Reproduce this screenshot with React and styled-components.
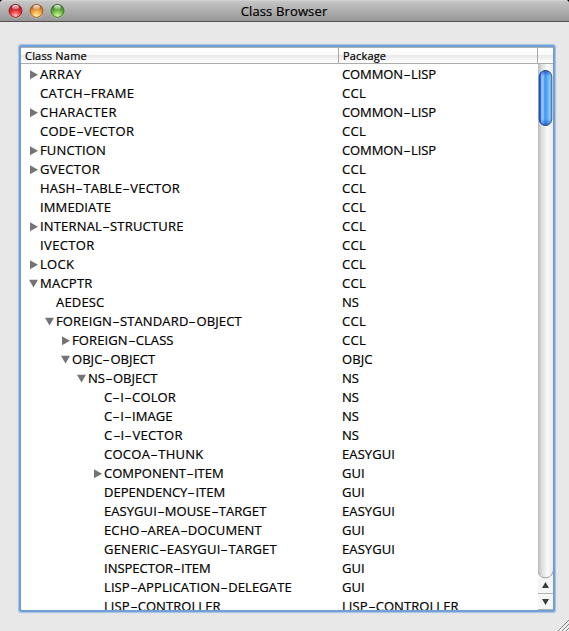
import React from "react";
import styled, { createGlobalStyle } from "styled-components";

const Global = createGlobalStyle`
  *, *::before, *::after { box-sizing: border-box; }
  html, body { margin: 0; background: #000; overflow: hidden; }
`;

const Window = styled.div`
  width: 569px;
  height: 631px;
  display: flex;
  flex-direction: column;
  position: relative;
  background: #e8e8e8;
  border-radius: 4px 4px 0 0;
  overflow: hidden;
  color: #000;
  font-family: "Open Sans", "Noto Sans", sans-serif;
  -webkit-text-stroke: 0.2px #000;
`;

const TitleBar = styled.header`
  flex: none;
  height: 22px;
  display: grid;
  grid-template-columns: 76px 1fr 77px;
  align-items: center;
  border-bottom: 1px solid #515151;
  background: linear-gradient(#dedede 0, #c6c6c6 1px, #969696 100%);
`;

const Lights = styled.div`
  display: flex;
  gap: 6px;
  padding-left: 7.5px;
  padding-top: 1px;
`;

const Title = styled.h1`
  margin: 0;
  text-align: center;
  font-size: 13px;
  font-weight: 400;
  line-height: 20px;
  letter-spacing: 0.14px;
`;

const Light = styled.svg`
  display: block;
  width: 15px;
  height: 16px;
`;

const Content = styled.main`
  flex: 1;
  padding: 25px 16px 21px 21px;
`;

const Outline = styled.section`
  width: 532px;
  height: 563px;
  display: flex;
  flex-direction: column;
  background: #fff;
  box-shadow: 0 0 0 2px #70a0d6, 0 0 1px 3px #a5c1e1;
  border-radius: 1px;
`;

const HeaderRow = styled.div`
  flex: none;
  height: 17px;
  display: grid;
  grid-template-columns: 318px 199px 15px;
  border-top: 1px solid #b0b0b0;
  border-bottom: 1px solid #acacac;
  background: linear-gradient(#fff 0, #fafafa 45%, #e9e9e9 50%, #fff 100%);
`;

const HeaderCell = styled.div`
  padding-left: 4px;
  border-right: ${(p) => (p.$last ? "0" : "1px solid #a8a8a8")};
  font-size: 11px;
  line-height: 15px;
  letter-spacing: ${(p) => p.$spacing || 0}px;
`;

const Body = styled.div`
  flex: 1;
  min-height: 0;
  display: flex;
`;

const List = styled.div`
  flex: 1;
  overflow: hidden;
  padding-top: 1px;
`;

const Row = styled.div`
  height: 19px;
  display: grid;
  grid-template-columns: 321px 1fr;
  font-size: 13px;
  line-height: 19px;
  white-space: nowrap;
`;

const NameCell = styled.div`
  display: flex;
  align-items: center;
  padding-left: ${(p) => 7 + p.$depth * 16}px;
`;

const Toggle = styled.svg`
  flex: none;
  width: 12px;
  height: 12px;
`;

const Label = styled.span`
  letter-spacing: ${(p) => p.$spacing}px;
`;

const Hyphen = styled.span`
  display: inline-block;
  width: 8px;
  text-align: center;
  letter-spacing: 0;
  transform: scaleX(1.7);
`;

const ScrollBar = styled.div`
  flex: none;
  width: 15px;
  display: flex;
  flex-direction: column;
`;

const Drawing = styled.svg`
  display: block;
`;

const Grip = styled.svg`
  position: absolute;
  right: 0;
  bottom: 0;
`;

// name, depth, disclosure state, package, tracking of the name
const rows = [
  ["ARRAY", 0, "closed", "COMMON-LISP", 0.4],
  ["CATCH-FRAME", 0, "", "CCL", 0.3],
  ["CHARACTER", 0, "closed", "COMMON-LISP", 0.45],
  ["CODE-VECTOR", 0, "", "CCL", 0.28],
  ["FUNCTION", 0, "closed", "COMMON-LISP", 0.15],
  ["GVECTOR", 0, "closed", "CCL", 0.3],
  ["HASH-TABLE-VECTOR", 0, "", "CCL", 0.22],
  ["IMMEDIATE", 0, "", "CCL", 0.12],
  ["INTERNAL-STRUCTURE", 0, "closed", "CCL", 0.18],
  ["IVECTOR", 0, "", "CCL", 0.38],
  ["LOCK", 0, "closed", "CCL", 0.3],
  ["MACPTR", 0, "open", "CCL", 0.25],
  ["AEDESC", 1, "", "NS", 0.17],
  ["FOREIGN-STANDARD-OBJECT", 1, "open", "CCL", 0.14],
  ["FOREIGN-CLASS", 2, "closed", "CCL", 0.1],
  ["OBJC-OBJECT", 2, "open", "OBJC", 0.05],
  ["NS-OBJECT", 3, "open", "NS", 0],
  ["C-I-COLOR", 4, "", "NS", 0.13],
  ["C-I-IMAGE", 4, "", "NS", 0.07],
  ["C-I-VECTOR", 4, "", "NS", 0.32],
  ["COCOA-THUNK", 4, "", "EASYGUI", 0.28],
  ["COMPONENT-ITEM", 4, "closed", "GUI", 0],
  ["DEPENDENCY-ITEM", 4, "", "GUI", 0],
  ["EASYGUI-MOUSE-TARGET", 4, "", "EASYGUI", 0.06],
  ["ECHO-AREA-DOCUMENT", 4, "", "GUI", 0.12],
  ["GENERIC-EASYGUI-TARGET", 4, "", "EASYGUI", 0.18],
  ["INSPECTOR-ITEM", 4, "", "GUI", 0],
  ["LISP-APPLICATION-DELEGATE", 4, "", "GUI", 0.1],
  ["LISP-CONTROLLER", 4, "", "LISP-CONTROLLER", 0.07],
];

const packageSpacing = {
  "COMMON-LISP": -0.1,
  CCL: 0.3,
  EASYGUI: 0.1,
  OBJC: 0.1,
  "LISP-CONTROLLER": 0.07,
};

function Name({ children, spacing = 0 }) {
  return (
    <Label $spacing={spacing}>
      {children.split("-").map((part, i) => (
        <React.Fragment key={i}>
          {i > 0 && <Hyphen>-</Hyphen>}
          {part}
        </React.Fragment>
      ))}
    </Label>
  );
}

function Disclosure({ state }) {
  return (
    <Toggle viewBox="0 0 12 12">
      {state === "closed" && <path d="M2 1.2L10 5.7L2 10.2Z" fill="#747474" />}
      {state === "open" && <path d="M1 1.8H10L5.5 9.5Z" fill="#747474" />}
    </Toggle>
  );
}

function Lamp({ id, dark, mid, glow }) {
  return (
    <Light viewBox="0 0 15 16">
      <defs>
        <radialGradient id={id} cx="50%" cy="88%" r="85%">
          <stop offset="0" stopColor={glow} />
          <stop offset="0.5" stopColor={mid} />
          <stop offset="1" stopColor={dark} />
        </radialGradient>
        <linearGradient id={id + "-shine"} x2="0" y2="1">
          <stop offset="0" stopColor="#fff" stopOpacity="0.95" />
          <stop offset="1" stopColor="#fff" stopOpacity="0.15" />
        </linearGradient>
      </defs>
      <circle cx="7.5" cy="8.6" r="7" fill="#d6d6d6" opacity="0.7" />
      <circle cx="7.5" cy="7.9" r="6.5" fill={`url(#${id})`} stroke={dark} strokeOpacity="0.85" />
      <ellipse cx="7.5" cy="4.2" rx="3.4" ry="2.3" fill={`url(#${id}-shine)`} />
    </Light>
  );
}

function Scroller() {
  return (
    <ScrollBar>
      <Drawing width="15" height="546" viewBox="0 0 15 546">
        <defs>
          <linearGradient id="track">
            <stop offset="0" stopColor="#b9b9b9" />
            <stop offset="0.25" stopColor="#dedede" />
            <stop offset="0.65" stopColor="#fbfbfb" />
            <stop offset="1" stopColor="#e9e9e9" />
          </linearGradient>
          <linearGradient id="thumb">
            <stop offset="0" stopColor="#1545c0" />
            <stop offset="0.12" stopColor="#2f6fe0" />
            <stop offset="0.2" stopColor="#a4cbf8" />
            <stop offset="0.36" stopColor="#7db6f5" />
            <stop offset="0.46" stopColor="#3f8ff0" />
            <stop offset="0.85" stopColor="#84cdff" />
            <stop offset="1" stopColor="#4a90d8" />
          </linearGradient>
          <linearGradient id="cap" x2="0" y2="1">
            <stop offset="0" stopColor="#0b43c4" stopOpacity="0.7" />
            <stop offset="0.1" stopColor="#0b43c4" stopOpacity="0" />
            <stop offset="0.88" stopColor="#0b43c4" stopOpacity="0" />
            <stop offset="1" stopColor="#0b43c4" stopOpacity="0.6" />
          </linearGradient>
          <linearGradient id="rim">
            <stop offset="0" stopColor="#1a47b4" />
            <stop offset="0.6" stopColor="#304668" />
            <stop offset="1" stopColor="#5a6470" />
          </linearGradient>
        </defs>
        <rect width="15" height="546" fill="url(#track)" />
        <rect x="1.2" y="6.5" width="12.6" height="55" rx="6.3" fill="url(#thumb)" />
        <rect x="1.2" y="6.5" width="12.6" height="55" rx="6.3" fill="url(#cap)" stroke="url(#rim)" />
        <path d="M0 506C1 516 14 516 15 506V546H0Z" fill="#f6f6f6" />
        <path d="M0 507C1 516 14 516 15 507" fill="none" stroke="#9b9b9b" />
        <path d="M0 529.5H15M0 545.5H15" stroke="#b0b0b0" />
        <path d="M4 524H11L7.5 518ZM4 535H11L7.5 541Z" fill="#3c3c3c" />
      </Drawing>
    </ScrollBar>
  );
}

export default function App() {
  return (
    <>
      <Global />
      <Window>
        <TitleBar>
          <Lights>
            <Lamp id="close" dark="#8d1420" mid="#e5343a" glow="#ffc0ba" />
            <Lamp id="minimize" dark="#985017" mid="#f0a244" glow="#fff0a0" />
            <Lamp id="zoom" dark="#2f6b1c" mid="#6cb845" glow="#d4f89c" />
          </Lights>
          <Title>Class Browser</Title>
        </TitleBar>
        <Content>
          <Outline>
            <HeaderRow>
              <HeaderCell $spacing={0.2}>Class Name</HeaderCell>
              <HeaderCell $spacing={0.15}>Package</HeaderCell>
              <HeaderCell $last />
            </HeaderRow>
            <Body>
              <List>
                {rows.map(([name, depth, state, pkg, spacing]) => (
                  <Row key={name}>
                    <NameCell $depth={depth}>
                      <Disclosure state={state} />
                      <Name spacing={spacing}>{name}</Name>
                    </NameCell>
                    <Name spacing={packageSpacing[pkg]}>{pkg}</Name>
                  </Row>
                ))}
              </List>
              <Scroller />
            </Body>
          </Outline>
        </Content>
        <Grip width="12" height="12" viewBox="0 0 12 12">
          <path d="M1 12L12 1M5 12L12 5M9 12L12 9" stroke="#858585" />
          <path d="M2 12.4L12.4 2M6 12.4L12.4 6M10 12.4L12.4 10" stroke="#fff" strokeWidth="0.6" />
        </Grip>
      </Window>
    </>
  );
}
